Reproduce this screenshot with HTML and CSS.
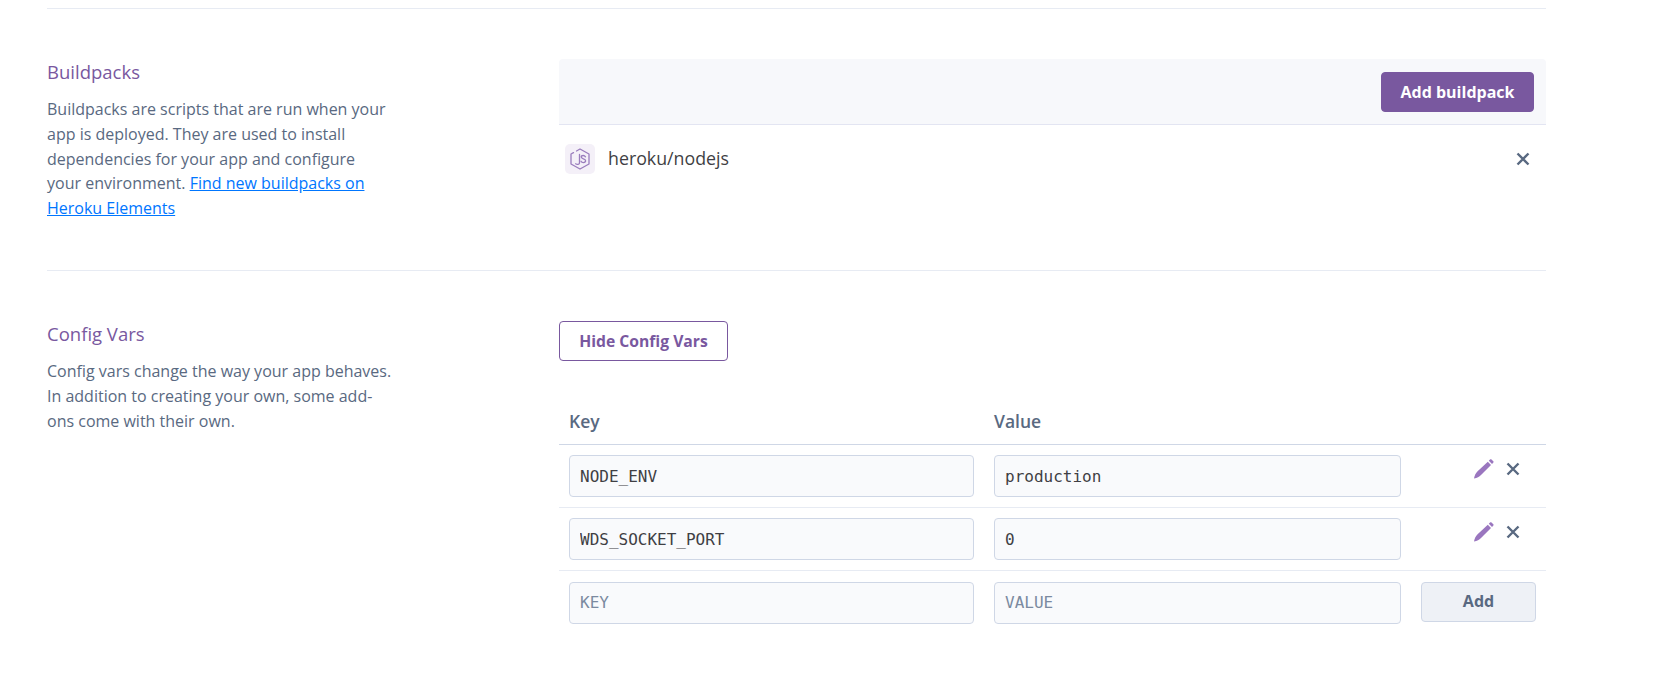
FILE: index.html
```html
<!DOCTYPE html>
<html lang="en">
<head>
  <meta charset="UTF-8" />
  <title>Settings</title>
  <link rel="stylesheet" href="styles.css">
</head>
<body>
  <main class="settings">

    <section class="panel panel-buildpacks">
      <div class="intro">
        <h3>Buildpacks</h3>
        <p>Buildpacks are scripts that are run when your app is deployed. They are used to install dependencies for your app and configure your environment. <a href="#">Find new buildpacks on Heroku Elements</a></p>
      </div>
      <div class="body">
        <div class="band">
          <button class="btn btn-primary">Add buildpack</button>
        </div>
        <div class="pack">
          <span class="pack-icon">
            <svg width="20" height="22" viewBox="0 0 20 22" fill="none" stroke="#9a7dbd" stroke-width="1.3" stroke-linejoin="round" stroke-linecap="round">
              <path d="M6.500 3 10 1l9 5v10l-9 5-9-5V6l2.500-1.400" />
              <path d="M9.500 6.500v8.500c0 1.600-2.500 1.900-3.800 .8" />
              <path d="M15.500 8.800c-.5-.8-1.300-1.300-2.300-1.300-1.200 0-2 .6-2 1.600 0 2.200 4.400 1.300 4.400 3.700 0 1.100-.9 1.800-2.200 1.800-1.100 0-2-.5-2.400-1.300" />
            </svg>
          </span>
          <span class="pack-name">heroku/nodejs</span>
          <button class="icon-btn pack-remove" aria-label="Remove">
            <svg width="14" height="14" viewBox="0 0 14 14"><path class="x" d="M1.500 1.500l11 11M12.500 1.500l-11 11" /></svg>
          </button>
        </div>
      </div>
    </section>

    <section class="panel panel-config">
      <div class="intro">
        <h3>Config Vars</h3>
        <p>Config vars change the way your app behaves. In addition to creating your own, some add-ons come with their own.</p>
      </div>
      <div class="body">
        <button class="btn btn-outline">Hide Config Vars</button>
        <div class="vars">
          <div class="vars-head">
            <span>Key</span>
            <span>Value</span>
          </div>
          <div class="vars-row">
            <input class="field" value="NODE_ENV" />
            <input class="field" value="production" />
            <div class="actions">
              <button class="icon-btn" aria-label="Edit">
                <svg width="22" height="22" viewBox="0 0 22 22"><path class="pencil" d="M1 20.500c.6-3.200 1.800-5.600 3.600-7.300L14.800 3.800l3.200 3.200L8 17c-1.800 1.800-3.800 2.800-7 3.500zM15.800 2.800l1.200-1.200c.5-.5 1.100-.5 1.500-.1l1.800 1.800c.4.4.4 1-.1 1.500L19 6z" /></svg>
              </button>
              <button class="icon-btn" aria-label="Remove">
                <svg width="14" height="14" viewBox="0 0 14 14"><path class="x" d="M1.500 1.500l11 11M12.500 1.500l-11 11" /></svg>
              </button>
            </div>
          </div>
          <div class="vars-row">
            <input class="field" value="WDS_SOCKET_PORT" />
            <input class="field" value="0" />
            <div class="actions">
              <button class="icon-btn" aria-label="Edit">
                <svg width="22" height="22" viewBox="0 0 22 22"><path class="pencil" d="M1 20.500c.6-3.200 1.800-5.600 3.600-7.300L14.800 3.800l3.200 3.200L8 17c-1.800 1.800-3.800 2.800-7 3.500zM15.800 2.800l1.200-1.200c.5-.5 1.100-.5 1.500-.1l1.800 1.800c.4.4.4 1-.1 1.500L19 6z" /></svg>
              </button>
              <button class="icon-btn" aria-label="Remove">
                <svg width="14" height="14" viewBox="0 0 14 14"><path class="x" d="M1.500 1.500l11 11M12.500 1.500l-11 11" /></svg>
              </button>
            </div>
          </div>
          <div class="vars-row">
            <input class="field" placeholder="KEY" />
            <input class="field" placeholder="VALUE" />
            <button class="btn btn-add">Add</button>
          </div>
        </div>
      </div>
    </section>

  </main>
</body>
</html>
```

FILE: styles.css
```css
* {
  box-sizing: border-box;
}
html, body {
  height: 100%;
}
body {
  margin: 0;
  background-color: #fff;
  font-family: "Open Sans", sans-serif;
  color: #596981;
  overflow: hidden;
}
.settings {
  width: 1499px;
  margin-left: 47px;
  padding-top: 8px;
}
.panel {
  display: grid;
  grid-template-columns: 512px 987px;
  border-top: 1px solid #e7ebf3;
}
.panel-buildpacks {
  height: 262px;
  padding-top: 50px;
}
.panel-config {
  padding-top: 50px;
}
.intro h3 {
  margin: 0;
  padding-top: 1px;
  font-size: 18.500px;
  line-height: 24px;
  font-weight: 400;
  color: #79589f;
}
.intro p {
  margin: 13px 0 0;
  width: 345px;
  font-size: 16px;
  line-height: 24.800px;
  color: #596981;
}
.intro a {
  color: #0076ff;
}
.band {
  height: 66px;
  display: flex;
  align-items: center;
  justify-content: flex-end;
  padding-right: 12px;
  background-color: #f7f8fb;
  border-bottom: 1px solid #e3e5f2;
  border-radius: 4px 4px 0 0;
}
.btn {
  font-family: "Open Sans", sans-serif;
  font-size: 16px;
  font-weight: 700;
  border-radius: 4px;
  cursor: pointer;
}
.btn-primary {
  width: 153px;
  height: 40px;
  color: #fff;
  background-color: #79589f;
  border: 1px solid #79589f;
}
.btn-outline {
  width: 169px;
  height: 40px;
  font-size: 15.700px;
  color: #79589f;
  background-color: #fff;
  border: 1px solid #79589f;
}
.btn-add {
  width: 115px;
  height: 40px;
  margin-bottom: 2px;
  padding-bottom: 3px;
  color: #596981;
  background-color: #eef1f6;
  border: 1px solid #cfd7e6;
}
.pack {
  display: flex;
  align-items: center;
  padding: 19px 16px 0 6px;
}
.pack-icon {
  width: 30px;
  height: 30px;
  display: flex;
  align-items: center;
  justify-content: center;
  background-color: #f4f0f8;
  border-radius: 5px;
}
.pack-name {
  margin-left: 13px;
  margin-top: -2px;
  font-size: 17.800px;
  color: #3f3f44;
}
.pack-remove {
  margin-left: auto;
}
.icon-btn {
  padding: 0;
  border: none;
  background: none;
  display: flex;
  cursor: pointer;
}
.x {
  fill: none;
  stroke: #596981;
  stroke-width: 2.400;
}
.pencil {
  fill: #9a76bf;
}
.vars {
  margin-top: 43px;
}
.vars-head {
  display: grid;
  grid-template-columns: 425px 1fr;
  height: 41px;
  padding-left: 10px;
  border-bottom: 1px solid #cfd7e6;
  font-size: 17.500px;
  font-weight: 600;
  line-height: 34px;
}
.vars-row {
  display: grid;
  grid-template-columns: 405px 407px 115px;
  column-gap: 20px;
  align-items: center;
  padding: 10px 10px;
  height: 63px;
  border-bottom: 1px solid #e7ebf3;
}
.vars-row:last-child {
  border-bottom: none;
}
.field {
  width: 100%;
  height: 42px;
  padding: 0 10px;
  font-family: "DejaVu Sans Mono", monospace;
  font-size: 16px;
  color: #3f3f44;
  background-color: #f9fafc;
  border: 1px solid #cfd7e6;
  border-radius: 4px;
}
.field::placeholder {
  color: #7b8aa0;
  opacity: 1;
}
.actions {
  display: flex;
  align-items: center;
  justify-content: flex-end;
  gap: 11px;
  padding: 0 16px 14px 0;
}
```
